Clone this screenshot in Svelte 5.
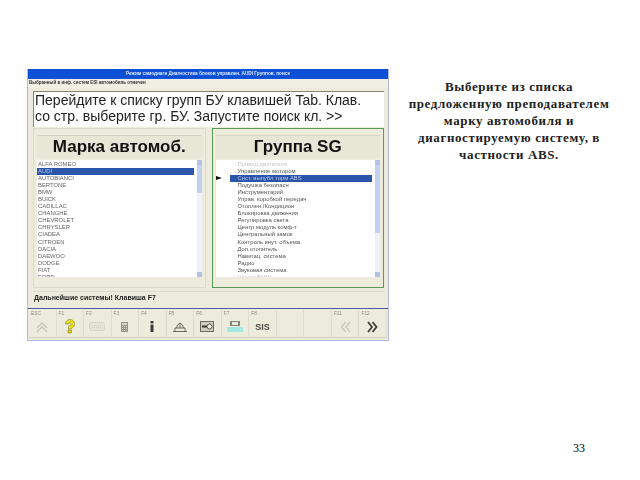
<script>
	const brands = ['ALFA ROMEO', 'AUDI', 'AUTOBIANCI', 'BERTONE', 'BMW', 'BUICK', 'CADILLAC', 'CHANGHE', 'CHEVROLET', 'CHRYSLER', 'CIADEA', 'CITROEN', 'DACIA', 'DAEWOO', 'DODGE', 'FIAT', 'FORD'];
	const groups = ['Привод двигателя', 'Управление мотором', 'Сист. выпубл торм ABS', 'Подушка безопасн', 'Инструментарий', 'Управ. коробкой передач', 'Отоплен./Кондицион', 'Блокировка движения', 'Регулировка света', 'Центр модуль комф-т', 'Центральный замок', 'Контроль внут. объема', 'Доп.отопитель', 'Навигац. система', 'Радио', 'Звуковая система', 'Шасси BMW'];
	const keys = ['ESC', 'F1', 'F2', 'F3', 'F4', 'F5', 'F6', 'F7', 'F8', '', '', 'F11', 'F12'];
</script>

<div class="slide">
	<div class="window">
		<div class="title">Режим самодиагн Диагностика блоков управлен. AUDI Группов. поиск</div>
		<div class="menu">Выбранный в инф. систем ESI автомобиль отмечен</div>
		<div class="body">
			<div class="message">Перейдите к списку групп БУ клавишей Tab. Клав.<br />со стр. выберите гр. БУ. Запустите поиск кл. &gt;&gt;</div>
			<div class="panels">
				<section class="panel">
					<h2>Марка автомоб.</h2>
					<div class="list">
						<ul>
							{#each brands as brand, i}
								<li class:selected={i === 1}>{brand}</li>
							{/each}
						</ul>
						<div class="scroll"><i class="arrow"></i><i class="thumb short"></i><i class="arrow down"></i></div>
					</div>
				</section>
				<section class="panel active">
					<h2>Группа SG</h2>
					<div class="list">
						<ul class="groups">
							{#each groups as group, i}
								<li class:selected={i === 2} class:faded={i === 0 || i === 16}>{group}</li>
							{/each}
						</ul>
						<span class="pointer"></span>
						<div class="scroll"><i class="arrow"></i><i class="thumb"></i><i class="arrow down"></i></div>
					</div>
				</section>
			</div>
			<div class="status">Дальнейшие системы! Клавиша F7</div>
		</div>
		<div class="keys">
			{#each keys as key, i}
				<div class="key">
					<span class="fn">{key}</span>
					<div class="icon">
						{#if i === 0}
							<svg width="14" height="12" viewBox="0 0 14 12"><path d="M2 7l5-5 5 5M2 11l5-5 5 5" fill="none" stroke="#c4c4b8" stroke-width="1.4" /></svg>
						{:else if i === 1}
							<svg width="14" height="15" viewBox="0 0 14 15"><path d="M2.500 5a4.500 4.500 0 1 1 7 3.700L8 10H5.500V7.300L7.500 6.300A1.300 1.300 0 1 0 5.500 5z" fill="#e8dc20" stroke="#94902c" stroke-width=".7" /><rect x="5" y="11" width="3.500" height="3" fill="#dccc18" stroke="#7d7a20" stroke-width=".5" /></svg>
						{:else if i === 2}
							<svg width="16" height="9" viewBox="0 0 16 9"><rect x=".5" y=".5" width="15" height="8" rx="2" fill="#e6e4d6" stroke="#d6d4c5" /><path d="M3 3.500h10M3 5.500h10" stroke="#d2d0c0" stroke-dasharray="1 1" /></svg>
						{:else if i === 3}
							<svg width="7" height="10" viewBox="0 0 7 10"><rect width="7" height="10" fill="#95958a" /><rect x="1" y="1" width="5" height="2" fill="#d8d6c8" /><path d="M1 4.500h5M1 6.500h5M1 8.500h5" stroke="#d8d6c8" stroke-dasharray="1 1" /></svg>
						{:else if i === 4}
							<svg width="4" height="11" viewBox="0 0 4 11"><rect x=".5" width="3" height="2.400" fill="#3b3b38" /><rect x=".5" y="3.600" width="3" height="7.400" fill="#3b3b38" /></svg>
						{:else if i === 5}
							<svg width="14" height="10" viewBox="0 0 14 10"><path d="M0 9.500h14M2 9V6h10v3M3.500 6l1-3 2.500-2 2.500 2 1 3M7 1v5" fill="none" stroke="#6a6a62" /></svg>
						{:else if i === 6}
							<svg width="14" height="11" viewBox="0 0 14 11"><rect x=".5" y=".5" width="13" height="10" fill="#cfcdbf" stroke="#6a6a62" /><path d="M2 5.500h5" stroke="#33332f" stroke-width="2" /><circle cx="9.500" cy="5.500" r="2.500" fill="#f0f0e6" stroke="#55554f" /></svg>
						{:else if i === 7}
							<svg width="16" height="11" viewBox="0 0 16 11"><rect x="3" y="0" width="10" height="5" fill="#85857b" /><rect x="5" y="1" width="6" height="3" fill="#e8e8dd" /><rect y="6" width="16" height="5" fill="#a2e8e0" /></svg>
						{:else if i === 8}
							<span class="sis">SIS</span>
						{:else if i === 11}
							<svg width="11" height="12" viewBox="0 0 11 12"><path d="M5.500 1L1.500 6 5.500 11M10 1L6 6 10 11" fill="none" stroke="#c6c6bb" stroke-width="1.400" /></svg>
						{:else if i === 12}
							<svg width="11" height="12" viewBox="0 0 11 12"><path d="M1 1l4 5-4 5M5.500 1l4 5-4 5" fill="none" stroke="#3e3e39" stroke-width="1.800" /></svg>
						{/if}
					</div>
				</div>
			{/each}
		</div>
	</div>

	<p class="note">Выберите из списка предложенную преподавателем марку автомобиля и диагностируемую систему, в частности ABS.</p>
	<span class="page">33</span>
</div>

<style>
	:global(body) {
		background: #fff;
	}

	.slide {
		position: relative;
		display: flex;
		align-items: flex-start;
		width: 640px;
		height: 480px;
		padding: 69px 0 0 27px;
		box-sizing: border-box;
		overflow: hidden;
	}

	.window {
		flex: none;
		width: 362px;
		height: 272px;
		display: flex;
		flex-direction: column;
		box-sizing: border-box;
		background: #ecebdc;
		border: 1px solid #b4b8d8;
		border-top: 0;
		font-family: "Liberation Sans", Arial, sans-serif;
		filter: blur(0.35px);
	}

	.title {
		flex: none;
		height: 10px;
		background: #0d50d8;
		color: #dfe8ff;
		font-size: 4.700px;
		font-weight: bold;
		line-height: 10px;
		padding-left: 98px;
		white-space: nowrap;
	}

	.menu {
		flex: none;
		height: 9px;
		background: #f0efe4;
		color: #333;
		font-size: 4.500px;
		font-weight: bold;
		line-height: 8px;
		padding-left: 1px;
		white-space: nowrap;
	}

	.body {
		flex: 1;
		min-height: 0;
		display: flex;
		flex-direction: column;
		padding: 3px 4px 0 5px;
		border-bottom: 1px solid #4c5ba0;
	}

	.message {
		flex: none;
		height: 36px;
		box-sizing: border-box;
		background: #fff;
		border-top: 1px solid #84846f;
		border-left: 1px solid #84846f;
		padding: 1px 0 0 1px;
		color: #222;
		font-size: 14px;
		line-height: 15.500px;
		white-space: nowrap;
	}

	.panels {
		flex: none;
		display: flex;
		gap: 6px;
		margin-top: 1px;
		height: 160px;
	}

	.panel {
		flex: 1;
		min-width: 0;
		box-sizing: border-box;
		padding: 6px 3px 0;
		border: 1px solid #dcdbcc;
		display: flex;
		flex-direction: column;
	}

	.panel.active {
		border: 1px solid #5c9a5c;
	}

	h2 {
		flex: none;
		margin: 0;
		height: 22px;
		background: #e8e6d4;
		border-top: 1px solid #d4d3c2;
		color: #111;
		font-size: 17px;
		line-height: 21px;
		font-weight: bold;
		text-align: center;
	}

	.list {
		position: relative;
		flex: 1;
		margin: 2px 0 10px;
		background: #fff;
		display: flex;
		overflow: hidden;
		min-height: 0;
	}

	ul {
		flex: 1;
		min-width: 0;
		margin: 0;
		padding: 1px 0 0;
		list-style: none;
	}

	li {
		height: 7.050px;
		padding-left: 1px;
		margin-right: 3px;
		color: #666;
		font-size: 5.900px;
		line-height: 7px;
		white-space: nowrap;
	}

	li.selected {
		background: #2b55a8;
		color: #b8c6e6;
	}

	.groups {
		padding-left: 14px;
	}

	.groups li {
		padding-left: 8px;
		color: #555;
	}

	.groups li.selected {
		color: #b8c6e6;
	}

	.groups li.faded {
		color: #c6c6c6;
	}

	.pointer {
		position: absolute;
		left: 0;
		top: 16px;
		border-left: 6px solid #111;
		border-top: 2px solid transparent;
		border-bottom: 2px solid transparent;
	}

	.scroll {
		flex: none;
		width: 5px;
		background: #eef1fa;
		display: flex;
		flex-direction: column;
	}

	.thumb {
		display: block;
		height: 68px;
		background: #c4d0f0;
	}

	.thumb.short {
		height: 28px;
	}

	.arrow {
		display: block;
		height: 5px;
		background: #b4c2e8;
	}

	.arrow.down {
		margin-top: auto;
	}

	.status {
		flex: 1;
		margin-top: 3px;
		border-top: 1px solid #dcdbcc;
		color: #222;
		font-size: 7px;
		font-weight: bold;
		line-height: 12px;
		padding-left: 1px;
	}

	.keys {
		flex: none;
		height: 31px;
		box-sizing: border-box;
		display: grid;
		grid-template-columns: repeat(13, 1fr);
		padding: 1px 1px 2px;
	}

	.key {
		display: flex;
		flex-direction: column;
		min-width: 0;
		border-right: 1px solid #dddccd;
		border-bottom: 1px solid #cfcebe;
	}

	.fn {
		height: 6px;
		padding-left: 2px;
		color: #8e8e82;
		font-size: 4.800px;
		line-height: 7px;
	}

	.icon {
		flex: 1;
		display: flex;
		align-items: center;
		justify-content: center;
	}

	.sis {
		color: #4a4a46;
		font-size: 9px;
		font-weight: bold;
	}

	.note {
		width: 210px;
		margin: 9px 0 0 15px;
		color: #222;
		font-family: "Liberation Serif", "Times New Roman", serif;
		font-size: 13px;
		font-weight: bold;
		letter-spacing: 0.6px;
		line-height: 17px;
		text-align: center;
	}

	.page {
		position: absolute;
		right: 55px;
		top: 441px;
		color: #000;
		font-family: "Liberation Serif", "Times New Roman", serif;
		font-size: 12px;
	}
</style>
